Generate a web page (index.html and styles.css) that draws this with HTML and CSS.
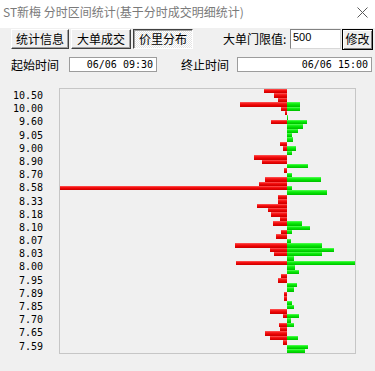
FILE: index.html
```html
<!DOCTYPE html>
<html lang="zh-CN">
<head>
<meta charset="utf-8">
<title>分时区间统计</title>
<link rel="stylesheet" href="styles.css">
</head>
<body>
<div class="window">
  <div class="titlebar">
    <span class="title">ST新梅 分时区间统计(基于分时成交明细统计)</span>
    <svg class="close" width="11" height="11" viewBox="0 0 11 11"><path d="M0.5 0.5L10.5 10.5M10.5 0.5L0.5 10.5" stroke="#5a5a5a" stroke-width="1" fill="none"/></svg>
  </div>
  <div class="toolbar">
    <button class="btn tab tab1">统计信息</button>
    <button class="btn tab tab2">大单成交</button>
    <button class="btn tab tab3 pressed">价里分布</button>
    <span class="lbl-limit">大单门限值:</span>
    <span class="input-limit">500</span>
    <button class="btn btn-edit">修改</button>
  </div>
  <div class="timerow">
    <span class="lbl-time">起始时间</span>
    <span class="tinput tinput1">06/06 09:30</span>
    <span class="lbl-time lbl-end">终止时间</span>
    <span class="tinput tinput2">06/06 15:00</span>
  </div>
  <div class="chartwrap">
    <div class="axis">
      <span>10.50</span><span>10.00</span><span>9.60</span><span>9.05</span><span>9.00</span>
      <span>8.90</span><span>8.70</span><span>8.58</span><span>8.33</span><span>8.18</span>
      <span>8.10</span><span>8.07</span><span>8.03</span><span>8.00</span><span>7.95</span>
      <span>7.89</span><span>7.85</span><span>7.70</span><span>7.65</span><span>7.59</span>
    </div>
    <div class="chart">
      <div class="row"><div class="neg"><i style="width:23px"></i></div><div class="pos"></div></div>
      <div class="row"><div class="neg"><i style="width:13px"></i></div><div class="pos"></div></div>
      <div class="row"><div class="neg"><i style="width:9px"></i></div><div class="pos"></div></div>
      <div class="row"><div class="neg"><i style="width:47px"></i></div><div class="pos"><i style="width:13px"></i></div></div>
      <div class="row"><div class="neg"><i style="width:6px"></i></div><div class="pos"><i style="width:13px"></i></div></div>
      <div class="row"><div class="neg"><i style="width:2px"></i></div><div class="pos"></div></div>
      <div class="row"><div class="neg"></div><div class="pos"><i style="width:1px"></i></div></div>
      <div class="row"><div class="neg"><i style="width:16px"></i></div><div class="pos"><i style="width:20px"></i></div></div>
      <div class="row"><div class="neg"></div><div class="pos"><i style="width:16px"></i></div></div>
      <div class="row"><div class="neg"></div><div class="pos"><i style="width:11px"></i></div></div>
      <div class="row"><div class="neg"></div><div class="pos"><i style="width:5px"></i></div></div>
      <div class="row"><div class="neg"></div><div class="pos"><i style="width:6px"></i></div></div>
      <div class="row"><div class="neg"><i style="width:7px"></i></div><div class="pos"></div></div>
      <div class="row"><div class="neg"><i style="width:4px"></i></div><div class="pos"><i style="width:9px"></i></div></div>
      <div class="row"><div class="neg"></div><div class="pos"><i style="width:5px"></i></div></div>
      <div class="row"><div class="neg"><i style="width:33px"></i></div><div class="pos"></div></div>
      <div class="row"><div class="neg"><i style="width:25px"></i></div><div class="pos"></div></div>
      <div class="row"><div class="neg"></div><div class="pos"><i style="width:21px"></i></div></div>
      <div class="row"><div class="neg"><i style="width:3px"></i></div><div class="pos"></div></div>
      <div class="row"><div class="neg"></div><div class="pos"><i style="width:5px"></i></div></div>
      <div class="row"><div class="neg"><i style="width:22px"></i></div><div class="pos"><i style="width:34px"></i></div></div>
      <div class="row"><div class="neg"><i style="width:28px"></i></div><div class="pos"></div></div>
      <div class="row"><div class="neg"><i style="width:227px"></i></div><div class="pos"><i style="width:5px"></i></div></div>
      <div class="row"><div class="neg"></div><div class="pos"><i style="width:40px"></i></div></div>
      <div class="row"><div class="neg"><i style="width:9px"></i></div><div class="pos"></div></div>
      <div class="row"><div class="neg"><i style="width:9px"></i></div><div class="pos"></div></div>
      <div class="row"><div class="neg"><i style="width:30px"></i></div><div class="pos"></div></div>
      <div class="row"><div class="neg"><i style="width:19px"></i></div><div class="pos"></div></div>
      <div class="row"><div class="neg"><i style="width:16px"></i></div><div class="pos"></div></div>
      <div class="row"><div class="neg"><i style="width:7px"></i></div><div class="pos"></div></div>
      <div class="row"><div class="neg"><i style="width:14px"></i></div><div class="pos"><i style="width:15px"></i></div></div>
      <div class="row"><div class="neg"></div><div class="pos"><i style="width:23px"></i></div></div>
      <div class="row"><div class="neg"><i style="width:6px"></i></div><div class="pos"><i style="width:5px"></i></div></div>
      <div class="row"><div class="neg"><i style="width:11px"></i></div><div class="pos"></div></div>
      <div class="row"><div class="neg"></div><div class="pos"><i style="width:4px"></i></div></div>
      <div class="row"><div class="neg"><i style="width:52px"></i></div><div class="pos"><i style="width:35px"></i></div></div>
      <div class="row"><div class="neg"><i style="width:17px"></i></div><div class="pos"><i style="width:47px"></i></div></div>
      <div class="row"><div class="neg"><i style="width:13px"></i></div><div class="pos"><i style="width:35px"></i></div></div>
      <div class="row"><div class="neg"></div><div class="pos"><i style="width:7px"></i></div></div>
      <div class="row"><div class="neg"><i style="width:51px"></i></div><div class="pos"><i style="width:68px"></i></div></div>
      <div class="row"><div class="neg"></div><div class="pos"><i style="width:8px"></i></div></div>
      <div class="row"><div class="neg"></div><div class="pos"><i style="width:12px"></i></div></div>
      <div class="row"><div class="neg"><i style="width:6px"></i></div><div class="pos"></div></div>
      <div class="row"><div class="neg"><i style="width:9px"></i></div><div class="pos"></div></div>
      <div class="row"><div class="neg"></div><div class="pos"><i style="width:10px"></i></div></div>
      <div class="row"><div class="neg"></div><div class="pos"><i style="width:7px"></i></div></div>
      <div class="row"><div class="neg"><i style="width:3px"></i></div><div class="pos"></div></div>
      <div class="row"><div class="neg"><i style="width:3px"></i></div><div class="pos"></div></div>
      <div class="row"><div class="neg"></div><div class="pos"><i style="width:5px"></i></div></div>
      <div class="row"><div class="neg"></div><div class="pos"><i style="width:7px"></i></div></div>
      <div class="row"><div class="neg"><i style="width:17px"></i></div><div class="pos"></div></div>
      <div class="row"><div class="neg"><i style="width:4px"></i></div><div class="pos"><i style="width:12px"></i></div></div>
      <div class="row"><div class="neg"></div><div class="pos"><i style="width:4px"></i></div></div>
      <div class="row"><div class="neg"><i style="width:8px"></i></div><div class="pos"><i style="width:7px"></i></div></div>
      <div class="row"><div class="neg"><i style="width:7px"></i></div><div class="pos"></div></div>
      <div class="row"><div class="neg"><i style="width:22px"></i></div><div class="pos"></div></div>
      <div class="row"><div class="neg"><i style="width:17px"></i></div><div class="pos"><i style="width:11px"></i></div></div>
      <div class="row"><div class="neg"><i style="width:4px"></i></div><div class="pos"></div></div>
      <div class="row"><div class="neg"></div><div class="pos"><i style="width:21px"></i></div></div>
      <div class="row"><div class="neg"></div><div class="pos"><i style="width:18px"></i></div></div>
    </div>
  </div>
</div>
</body>
</html>
```

FILE: styles.css
```css
* { box-sizing: border-box; }

html, body {
  margin: 0;
  padding: 0;
}

body {
  width: 375px;
  height: 371px;
  overflow: hidden;
  background: #f0f0f0;
  font-family: "Noto Sans CJK SC", "Noto Sans", sans-serif;
  font-size: 12px;
  color: #000;
}

.window {
  display: flex;
  flex-direction: column;
}

/* title bar */
.titlebar {
  height: 28px;
  background: #ffffff;
  display: flex;
  align-items: flex-start;
  justify-content: space-between;
  padding: 3px 7px 0 3px;
}

.title {
  line-height: 18px;
  font-size: 12px;
  color: #7a7a7a;
  white-space: nowrap;
}

.close {
  margin-top: 4px;
  display: block;
}

/* toolbar */
.toolbar {
  margin-top: 1px;
  height: 20px;
  padding-left: 11px;
  display: flex;
  align-items: center;
}

.btn {
  font-family: "Noto Sans CJK SC", sans-serif;
  font-size: 12px;
  line-height: 16px;
  color: #000;
  margin: 0;
  padding: 0;
  background: #f0f0f0;
  border: 1px solid;
  border-color: #ffffff #404040 #404040 #ffffff;
  box-shadow: inset -1px -1px 0 #a0a0a0;
  height: 20px;
  display: flex;
  align-items: center;
  justify-content: center;
}

.tab1 { width: 58px; }
.tab2 { width: 60px; margin-left: 2px; }
.tab3 { width: 60px; margin-left: 2px; }

.pressed {
  border-color: #404040 #ffffff #ffffff #404040;
  box-shadow: inset 1px 1px 0 #a0a0a0;
  background: repeating-conic-gradient(#ffffff 0 25%, #e4e4e4 0 50%) 0 0 / 2px 2px;
}

.lbl-limit {
  margin-left: 30px;
  width: 67px;
  white-space: nowrap;
  line-height: 20px;
}

.input-limit {
  width: 51px;
  height: 20px;
  background: #ffffff;
  border: 1px solid;
  border-color: #828282 #d8d8d8 #d8d8d8 #828282;
  font-family: "Liberation Sans", Arial, sans-serif;
  font-size: 11px;
  line-height: 15px;
  padding-left: 2px;
}

.btn-edit {
  width: 31px;
  height: 21px;
  margin-left: 1px;
  border: 1px solid #000;
  box-shadow: inset 1px 1px 0 #ffffff, inset -1px -1px 0 #808080;
}

/* time row */
.timerow {
  margin-top: 8px;
  height: 15px;
  padding-left: 11px;
  display: flex;
  align-items: center;
}

.lbl-time {
  width: 58px;
  line-height: 15px;
  white-space: nowrap;
}

.lbl-end {
  margin-left: 24px;
  width: 56px;
}

.tinput {
  height: 15px;
  background: #ffffff;
  border: 1px solid #9c9c9c;
  font-family: "DejaVu Sans Mono", "Liberation Mono", monospace;
  font-size: 10px;
  line-height: 13px;
  text-align: right;
  padding-right: 3px;
  white-space: nowrap;
}

.tinput1 { width: 88px; }
.tinput2 { width: 135px; }

/* chart */
.chartwrap {
  margin-top: 16px;
  display: flex;
  align-items: flex-start;
}

.axis {
  width: 44px;
  padding-top: 1px;
  padding-right: 1px;
  display: flex;
  flex-direction: column;
  font-family: "DejaVu Sans Mono", "Liberation Mono", monospace;
  font-size: 10px;
}

.axis span {
  height: 13.2px;
  line-height: 13.2px;
  text-align: right;
}

.chart {
  margin-left: 15px;
  width: 297px;
  height: 266px;
  border: 1px solid #c6c6c6;
  display: flex;
  flex-direction: column;
}

.row {
  flex: 1 1 0;
  display: grid;
  grid-template-columns: 227px 68px;
}

.neg {
  display: flex;
  justify-content: flex-end;
}

.pos {
  display: flex;
  justify-content: flex-start;
}

.row i {
  display: block;
  height: 100%;
}

.neg i {
  background: linear-gradient(to bottom, #ff5a5a 0%, #f51515 35%, #e40000 70%, #c80000 100%);
}

.pos i {
  background: linear-gradient(to bottom, #5aff5a 0%, #10ee10 35%, #00d800 70%, #00bc00 100%);
}
```
